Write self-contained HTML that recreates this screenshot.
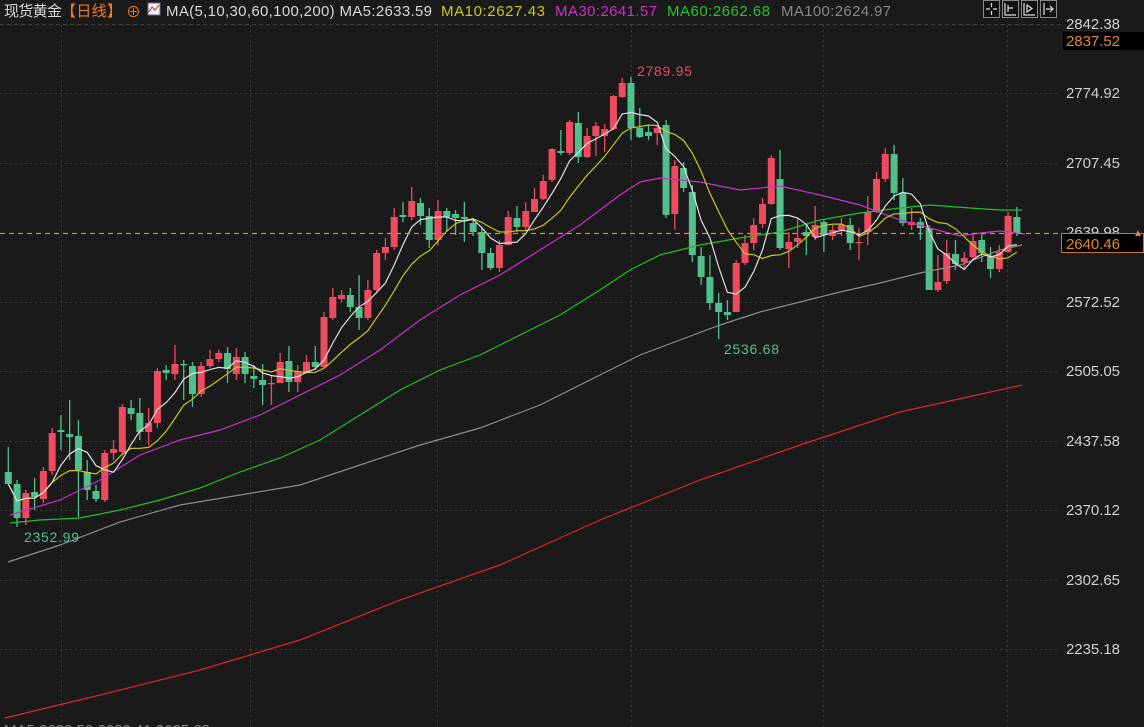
<!DOCTYPE html>
<html><head><meta charset="utf-8"><style>
html,body{margin:0;padding:0;background:#1a1a1a;width:1144px;height:727px;overflow:hidden}
svg{display:block}
text{font-family:"Liberation Sans","Noto Sans CJK SC",sans-serif}
</style></head><body>
<svg id="c" width="1144" height="727" xmlns="http://www.w3.org/2000/svg">
<rect width="1144" height="727" fill="#1a1a1a"/>
<g id="grid" stroke="#3a3a3a" stroke-dasharray="2,3" stroke-width="1"></g>
<line x1="0" y1="24.5" x2="1063" y2="24.5" stroke="#444" stroke-dasharray="4,3"/>
<g id="cand"></g>
<g id="ma" fill="none" stroke-width="1.2"></g>
<line x1="0" y1="233.5" x2="1063" y2="233.5" stroke="#e08a2a" stroke-dasharray="5,4" stroke-width="1.2"/>
<g font-size="15" fill="#d0d0d0">
<text x="1066" y="29" textLength="54">2842.38</text>
<text x="1066" y="98" textLength="54">2774.92</text>
<text x="1066" y="168" textLength="54">2707.45</text>
<text x="1066" y="237" textLength="54">2639.98</text>
<text x="1066" y="307" textLength="54">2572.52</text>
<text x="1066" y="376" textLength="54">2505.05</text>
<text x="1066" y="446" textLength="54">2437.58</text>
<text x="1066" y="515" textLength="54">2370.12</text>
<text x="1066" y="585" textLength="54">2302.65</text>
<text x="1066" y="654" textLength="54">2235.18</text>
</g>
<rect x="1063" y="32" width="81" height="18" fill="#000"/>
<text x="1066" y="46" font-size="15" fill="#e08a2a" textLength="54">2837.52</text>
<rect x="1061.5" y="233.5" width="82" height="19" fill="#000" stroke="#c77a25"/>
<text x="1066" y="249" font-size="15" fill="#e08a2a" textLength="54">2640.46</text>
<text x="1133" y="236" font-size="10" fill="#e08a2a">▲</text>
<text x="637" y="76" font-size="14" fill="#e84a5f" textLength="55">2789.95</text>
<text x="724" y="354" font-size="14" fill="#52c08c" textLength="55">2536.68</text>
<text x="24" y="542" font-size="14" fill="#52c08c" textLength="55">2352.99</text>
<g font-size="15">
<text x="4" y="16" fill="#d8d8d8" textLength="58">现货黄金</text>
<text x="61" y="16" fill="#f07a2a" textLength="61">【日线】</text>
<text x="126" y="17" fill="#f07a2a">⊕</text>
<rect x="148" y="3" width="12" height="12" fill="#eee" stroke="#66a"/>
<polyline points="149,12 152,7 155,10 159,5" fill="none" stroke="#d22" stroke-width="1"/>
<text x="166" y="16" fill="#d8d8d8" textLength="266">MA(5,10,30,60,100,200) MA5:2633.59</text>
<text x="441" y="16" fill="#c8c81e" textLength="104">MA10:2627.43</text>
<text x="555" y="16" fill="#c830c8" textLength="102">MA30:2641.57</text>
<text x="667" y="16" fill="#2cc02c" textLength="103">MA60:2662.68</text>
<text x="781" y="16" fill="#888" textLength="110">MA100:2624.97</text>
</g>
<g fill="#111" stroke="#888">
<rect x="983.5" y="0.5" width="16" height="17"/><rect x="1002.5" y="0.5" width="16" height="17"/>
<rect x="1021.5" y="0.5" width="16" height="17"/><rect x="1040.5" y="0.5" width="16" height="17"/>
</g>
<g stroke="#ddd" fill="none" stroke-width="1.2">
<path d="M991.5 3v4M991.5 11v4M986 9h4M993 9h4"/>
<path d="M1005 3v12h11M1008 5v7M1008 8h5"/>
<path d="M1024 3v12h11M1027 5v7l5-3.5z"/>
<path d="M1044 3v12M1046 9h7M1050 6l3 3-3 3"/>
</g>
<text x="4" y="735" font-size="15" fill="#888">MA5 2633.59 2629.41 2625.62</text>
</svg>
<script>
var ns="http://www.w3.org/2000/svg";
function el(p,t,a){var e=document.createElementNS(ns,t);for(var k in a)e.setAttribute(k,a[k]);p.appendChild(e);return e;}
var g=document.getElementById("grid");
[93,163,302,371,441,510,580,649].forEach(function(y){el(g,"line",{x1:0,y1:y+.5,x2:1060,y2:y+.5});});
[61,250,437,631,823,1007].forEach(function(x){el(g,"line",{x1:x+.5,y1:25,x2:x+.5,y2:727});});
var D=[
["g",472,484,447,484],["g",484,518,480,527],["r",493,518,490,525],["g",492,497,478,510],["r",471,499,467,503],
["r",433,471,428,475],["g",430,432,415,450],["g",434,437,400,460],["g",436,470,420,517],["g",472,490,460,500],
["g",491,499,485,502],["r",453,500,450,502],["r",449,453,440,460],["r",407,452,404,455],["g",408,414,400,420],
["g",413,432,398,440],["r",423,432,408,445],["r",371,423,368,428],["g",370,373,365,380],["r",364,374,345,380],
["g",364,365,360,400],["g",366,394,362,407],["r",366,394,362,397],["r",359,366,350,368],["r",353,359,350,362],
["g",353,369,347,383],["r",357,374,348,380],["g",357,374,352,383],["g",376,379,365,388],["g",380,385,364,405],
["r",383,384,375,405],["r",362,383,353,383],["g",361,382,346,392],["r",372,382,365,392],["r",362,372,355,372],
["g",362,367,346,370],["r",317,367,312,368],
["r",297,318,288,320],["r",295,299,290,302],["g",295,307,288,312],["g",307,318,275,330],["r",290,318,280,320],
["r",253,290,250,292],["r",247,253,238,260],["r",217,247,208,250],["g",215,217,202,222],["r",201,217,187,220],
["g",203,216,198,225],["g",216,240,208,248],["r",211,240,200,245],["g",211,217,208,232],["g",214,218,210,235],
["g",217,219,202,242],["g",223,232,218,236],["g",232,253,228,270],["g",253,268,248,270],["r",245,268,240,272],
["r",217,245,211,245],["g",218,227,206,232],["r",211,227,202,230],["r",199,212,188,212],["r",181,199,175,200],
["r",149,180,148,182],["g",151,153,130,155],["r",122,153,120,155],["g",123,157,112,163],["r",136,157,128,158],
["r",126,136,122,156],["r",129,136,124,152],["r",96,129,95,130],["r",83,97,78,98],["g",83,128,77,140],
["g",128,137,108,138],["g",132,136,125,140],["r",128,133,125,145],
["g",125,215,120,218],["r",166,214,160,230],["g",168,188,162,192],["g",192,255,185,262],["g",256,277,247,285],
["g",277,303,255,310],["g",303,312,293,339],["g",312,315,300,320],["r",263,312,260,312],["r",243,263,235,265],
["r",225,243,218,250],["r",204,224,198,228],["r",158,204,155,205],["g",179,248,150,250],["r",242,249,232,268],
["r",238,242,218,248],["g",232,236,225,255],["r",225,237,206,240],["g",222,235,220,252],["r",230,236,225,240],
["r",225,230,218,236],["g",225,243,218,250],["r",242,243,228,260],["r",212,232,196,245],["r",179,212,172,213],
["r",154,179,148,182],["g",154,193,145,200],["g",193,223,178,226],["r",222,225,208,230],["g",222,228,218,240],
["g",228,290,225,290],["r",282,290,255,292],["r",253,281,240,284],["g",254,264,240,270],["r",258,262,252,268],
["r",241,257,235,260],["g",240,253,234,262],["g",257,269,247,278],["r",252,269,245,272],["r",216,252,212,253],
["g",217,233,207,236]];
var cg=document.getElementById("cand"),closes=[],xs=[];
D.forEach(function(d,i){
 var x=8.3+i*8.77,col=d[0]=="r"?"#ef4b5f":"#52c08c";
 xs.push(x);closes.push(d[0]=="r"?d[1]:d[2]);
 el(cg,"line",{x1:x,y1:d[3],x2:x,y2:d[4],stroke:col,"stroke-width":1.3});
 el(cg,"rect",{x:x-3.5,y:d[1],width:7,height:Math.max(1.3,d[2]-d[1]),fill:col});
});
var mg=document.getElementById("ma");
function ma(n){var p=[];for(var i=0;i<closes.length;i++){var s=0,c=0;for(var j=Math.max(0,i-n+1);j<=i;j++){s+=closes[j];c++;}p.push(xs[i].toFixed(1)+","+(s/c).toFixed(1));}return p.join(" ");}
function pl(pts,col){el(mg,"polyline",{points:pts,stroke:col});}
pl("5,718 100,695 200,670 300,640 400,600 500,565 600,520 700,480 800,445 900,412 1022,385","#e02424");
pl("8,562 60,545 120,522 180,505 240,495 300,485 360,465 420,445 480,428 540,405 600,375 640,355 680,340 720,325 760,312 800,302 840,292 880,283 920,273 960,265 1000,250 1022,245","#8a8a8a");
pl("10,523 40,520 80,518 120,510 160,500 200,488 240,472 280,458 320,440 360,415 400,390 440,370 480,355 520,335 560,315 600,290 630,270 660,255 700,245 740,238 780,232 820,220 860,213 900,208 930,205 970,208 1000,210 1022,210","#22c022");
pl("10,515 60,500 100,480 140,455 180,440 220,430 260,415 300,395 340,375 380,350 420,320 460,295 500,275 540,250 580,225 620,195 640,182 660,178 700,182 740,190 780,186 820,195 860,205 900,220 930,228 960,236 980,233 1000,231 1025,234","#c830c8");
pl(ma(10),"#c8c81e");
pl(ma(5),"#e0e0e0");
</script>
</body></html>
